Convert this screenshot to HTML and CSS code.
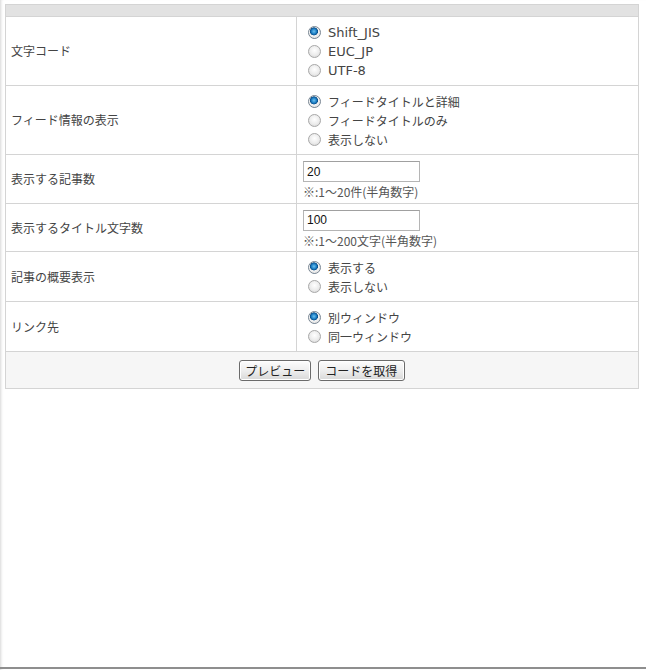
FILE: index.html
```html
<!DOCTYPE html>
<html>

<head lang="ja">
    <meta charset="UTF-8">
    <title>ブログパーツ設定</title>
    <link rel="stylesheet" href="styles.css">
</head>

<body>
    <table class="setting">
        <tr class="head">
            <th colspan="2"></th>
        </tr>
        <tr class="row-radio3">
            <td class="label">文字コード</td>
            <td class="value">
                <label class="opt en"><input type="radio" name="charset" checked>Shift_JIS</label>
                <label class="opt en"><input type="radio" name="charset">EUC_JP</label>
                <label class="opt en"><input type="radio" name="charset">UTF-8</label>
            </td>
        </tr>
        <tr class="row-radio3">
            <td class="label">フィード情報の表示</td>
            <td class="value">
                <label class="opt"><input type="radio" name="feed" checked>フィードタイトルと詳細</label>
                <label class="opt"><input type="radio" name="feed">フィードタイトルのみ</label>
                <label class="opt"><input type="radio" name="feed">表示しない</label>
            </td>
        </tr>
        <tr class="row-input">
            <td class="label">表示する記事数</td>
            <td class="value">
                <input class="num" type="text" value="20">
                <p class="note">※:1～20件(半角数字)</p>
            </td>
        </tr>
        <tr class="row-input short">
            <td class="label">表示するタイトル文字数</td>
            <td class="value">
                <input class="num" type="text" value="100">
                <p class="note">※:1～200文字(半角数字)</p>
            </td>
        </tr>
        <tr class="row-radio2">
            <td class="label">記事の概要表示</td>
            <td class="value">
                <label class="opt"><input type="radio" name="summary" checked>表示する</label>
                <label class="opt"><input type="radio" name="summary">表示しない</label>
            </td>
        </tr>
        <tr class="row-radio2">
            <td class="label">リンク先</td>
            <td class="value">
                <label class="opt"><input type="radio" name="target" checked>別ウィンドウ</label>
                <label class="opt"><input type="radio" name="target">同一ウィンドウ</label>
            </td>
        </tr>
        <tr class="foot">
            <td colspan="2">
                <button class="btn btn-preview">プレビュー</button>
                <button class="btn btn-code">コードを取得</button>
            </td>
        </tr>
    </table>
    <div class="bottom-line"></div>
</body>

</html>
```

FILE: styles.css
```css
html,
body {
    height: 100%;
}

body {
    margin: 0;
    padding: 4px 8px 0 5px;
    box-sizing: border-box;
    background-color: #fff;
    font-family: "Noto Sans CJK JP", "Liberation Sans", sans-serif;
    font-size: 12px;
    color: #444;
    position: relative;
    box-shadow: inset 3px 0 3px -2px #d6d6d6;
}

.setting {
    width: 634px;
    border-collapse: collapse;
    border: 1px solid #d4d4d4;
}

.setting td,
.setting th {
    border: 1px solid #d4d4d4;
    padding: 0;
    vertical-align: middle;
}

.head th {
    height: 11px;
    background-color: #e2e2e2;
}

.label {
    width: 285px;
    padding-left: 5px !important;
    line-height: 14px;
}

.value {
    padding-left: 6px !important;
}

.row-radio3 td {
    height: 68px;
}

.row-radio2 td {
    height: 49px;
}

.row-input td {
    height: 48px;
}

.row-input.short td {
    height: 47px;
}

.opt {
    display: flex;
    align-items: center;
    height: 19px;
    line-height: 19px;
}

.opt.en {
    font-family: "DejaVu Sans", "Liberation Sans", sans-serif;
    font-size: 13px;
}

.opt input {
    appearance: none;
    -webkit-appearance: none;
    width: 13px;
    height: 13px;
    margin: 0 7px 0 5px;
    border-radius: 50%;
    border: 1px solid #a9a9a9;
    background: radial-gradient(circle at 50% 40%, #ffffff 0%, #ececec 55%, #cfcfcf 100%);
    box-sizing: border-box;
}

.opt input:checked {
    border-color: #7a8794;
    background: radial-gradient(circle at 45% 40%, #6ec2f0 0%, #1c7ec4 28%, #0b4f8a 42%, #f4f4f4 48%, #e2e2e2 80%, #c8c8c8 100%);
}

.num {
    display: block;
    width: 117px;
    height: 21px;
    margin: 2px 0 0 0;
    padding: 1px 3px;
    box-sizing: border-box;
    border: 1px solid #b5b5b5;
    border-top-color: #a0a0a0;
    font-family: "Liberation Sans", sans-serif;
    font-size: 12px;
    color: #111;
}

.note {
    margin: 3px 0 0 0;
    line-height: 14px;
    color: #555;
}

.foot td {
    height: 35px;
    background-color: #f6f6f6;
    text-align: center;
    padding-top: 1px;
}

.btn {
    height: 21px;
    padding: 0;
    margin: 0 2px;
    border: 1px solid #6b6b6b;
    border-radius: 3px;
    background: linear-gradient(#fdfdfd, #ececec 55%, #d8d8d8);
    box-shadow: inset 0 0 0 1px #fff;
    font-family: "Noto Sans CJK JP", sans-serif;
    font-size: 12px;
    line-height: 17px;
    color: #222;
}

.btn-preview {
    width: 72px;
}

.btn-code {
    width: 87px;
}

.bottom-line {
    position: absolute;
    left: 0;
    right: 0;
    bottom: 1px;
    height: 2px;
    background-color: #8e8e8e;
}
```
